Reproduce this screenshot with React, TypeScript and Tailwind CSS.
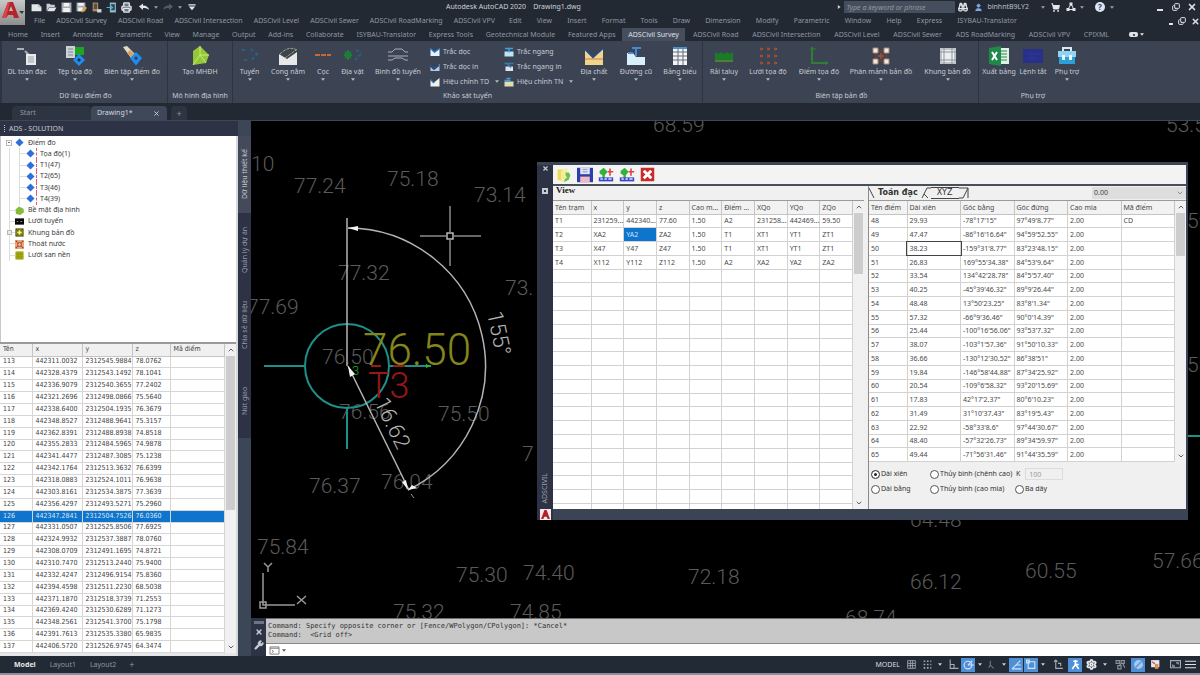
import React, { useState } from 'react';
import {
  Binoculars,
  ChevronDown,
  ChevronUp,
  Copy,
  Printer,
  Settings,
  ShoppingCart,
  User,
  Wrench,
  X
} from 'lucide-react';

const MENU_ADS = [
  'File',
  'ADSCivil Survey',
  'ADSCivil Road',
  'ADSCivil Intersection',
  'ADSCivil Level',
  'ADSCivil Sewer',
  'ADSCivil RoadMarking',
  'ADSCivil VPV'
];

const MENU_CAD = [
  'Edit',
  'View',
  'Insert',
  'Format',
  'Tools',
  'Draw',
  'Dimension',
  'Modify',
  'Parametric',
  'Window',
  'Help',
  'Express',
  'ISYBAU-Translator'
];

const TABS_MAIN = [
  'Home',
  'Insert',
  'Annotate',
  'Parametric',
  'View',
  'Manage',
  'Output',
  'Add-ins',
  'Collaborate',
  'ISYBAU-Translator',
  'Express Tools',
  'Geotechnical Module',
  'Featured Apps',
  'ADSCivil Survey'
];

const TABS_ADS = [
  'ADSCivil Road',
  'ADSCivil Intersection',
  'ADSCivil Level',
  'ADSCivil Sewer',
  'ADS RoadMarking',
  'ADSCivil VPV',
  'CPIXML'
];

const POINTS = [
  ['113', '442311.0032', '2312545.9884', '78.0762'],
  ['114', '442328.4379', '2312543.1492', '78.1041'],
  ['115', '442336.9079', '2312540.3655', '77.2402'],
  ['116', '442321.2696', '2312498.0866', '75.5640'],
  ['117', '442338.6400', '2312504.1935', '76.3679'],
  ['118', '442348.8527', '2312488.9641', '75.3157'],
  ['119', '442362.8391', '2312488.8938', '74.8518'],
  ['120', '442355.2833', '2312484.5965', '74.9878'],
  ['121', '442341.4477', '2312487.3085', '75.1238'],
  ['122', '442342.1764', '2312513.3632', '76.6399'],
  ['123', '442318.0883', '2312524.1011', '76.9638'],
  ['124', '442303.8161', '2312534.3875', '77.3639'],
  ['125', '442356.4297', '2312493.5271', '75.2960'],
  ['126', '442347.2841', '2312504.7526', '76.0360'],
  ['127', '442331.0507', '2312525.8506', '77.6925'],
  ['128', '442324.9932', '2312537.3887', '78.0760'],
  ['129', '442308.0709', '2312491.1695', '74.8721'],
  ['130', '442310.7470', '2312513.2440', '75.9400'],
  ['131', '442332.4247', '2312496.9154', '75.8360'],
  ['132', '442394.4598', '2312511.2230', '68.5038'],
  ['133', '442371.1870', '2312518.3739', '71.2553'],
  ['134', '442369.4240', '2312530.6289', '71.1273'],
  ['135', '442348.2561', '2312541.3700', '75.1798'],
  ['136', '442391.7613', '2312535.3380', '65.9835'],
  ['137', '442406.5720', '2312526.9745', '64.3474']
];

const STATION_HEAD = ['Tên trạm', 'x', 'y', 'z', 'Cao m...', 'Điểm ...', 'XQo', 'YQo', 'ZQo'];

const STATIONS = [
  ['T1', '231259...', '442340...', '77.60', '1.50', 'A2', '231258...', '442469...', '59.50'],
  ['T2', 'XA2', 'YA2', 'ZA2', '1.50', 'T1', 'XT1', 'YT1', 'ZT1'],
  ['T3', 'X47', 'Y47', 'Z47', '1.50', 'T1', 'XT1', 'YT1', 'ZT1'],
  ['T4', 'X112', 'Y112', 'Z112', '1.50', 'A2', 'XA2', 'YA2', 'ZA2']
];

const SHOT_HEAD = ['Tên điểm', 'Dài xiên', 'Góc bằng', 'Góc đứng', 'Cao mia', 'Mã điểm'];

const SHOTS = [
  ['48', '29.93', '-78°17\'15"', '97°49\'8.77"', '2.00', 'CD'],
  ['49', '47.47', '-86°16\'16.64"', '94°59\'52.55"', '2.00', ''],
  ['50', '38.23', '-159°31\'8.77"', '83°23\'48.15"', '2.00', ''],
  ['51', '26.83', '169°55\'34.38"', '84°53\'9.64"', '2.00', ''],
  ['52', '33.54', '134°42\'28.78"', '84°5\'57.40"', '2.00', ''],
  ['53', '40.25', '-45°39\'46.32"', '89°9\'26.44"', '2.00', ''],
  ['54', '48.48', '13°50\'23.25"', '83°8\'1.34"', '2.00', ''],
  ['55', '57.32', '-66°9\'36.46"', '90°0\'14.39"', '2.00', ''],
  ['56', '25.44', '-100°16\'56.06"', '93°53\'7.32"', '2.00', ''],
  ['57', '38.07', '-103°1\'57.36"', '91°50\'10.33"', '2.00', ''],
  ['58', '36.66', '-130°12\'30.52"', '86°38\'51"', '2.00', ''],
  ['59', '19.84', '-146°58\'44.88"', '87°34\'25.92"', '2.00', ''],
  ['60', '20.54', '-109°6\'58.32"', '93°20\'15.69"', '2.00', ''],
  ['61', '17.83', '42°17\'2.37"', '80°6\'10.23"', '2.00', ''],
  ['62', '31.49', '31°10\'37.43"', '83°19\'5.43"', '2.00', ''],
  ['63', '22.92', '-58°33\'8.6"', '97°44\'30.67"', '2.00', ''],
  ['64', '48.40', '-57°32\'26.73"', '89°34\'59.97"', '2.00', ''],
  ['65', '49.44', '-71°56\'31.46"', '91°44\'35.59"', '2.00', '']
];

/* Spot heights on the drawing: x, baseline y, text */
const HEIGHTS: [number, number, string][] = [
  [0, 50, '10'],
  [43, 72, '77.24'],
  [136, 65, '75.18'],
  [223, 81, '73.14'],
  [87, 159, '77.32'],
  [-4, 193, '77.69'],
  [254, 174, '73.'],
  [71, 243, '76.50'],
  [187, 300, '75.50'],
  [88, 298, '76.56'],
  [58, 372, '76.37'],
  [130, 368, '76.04'],
  [271, 340, '7'],
  [6, 433, '75.84'],
  [205, 461, '75.30'],
  [272, 459, '74.40'],
  [142, 498, '75.32'],
  [259, 498, '74.85'],
  [437, 463, '72.18'],
  [659, 468, '66.12'],
  [774, 457, '60.55'],
  [901, 447, '57.66'],
  [594, 504, '68.74'],
  [402, 11, '68.59'],
  [915, 11, '53.5'],
  [659, 406, '64.48'],
  [936, 107, '59'],
  [936, 251, '58']
];

function Svg({ className, children }: { className: string; children: React.ReactNode }) {
  return (
    <svg viewBox="0 0 20 20" className={className} fill="none" aria-hidden="true">
      {children}
    </svg>
  );
}

function Caret({ className = 'text-[#9aa2ae]' }: { className?: string }) {
  return (
    <svg viewBox="0 0 6 4" className={`h-[3px] w-[4px] shrink-0 ${className}`} aria-hidden="true">
      <path d="M0 0h6L3 4z" fill="currentColor" />
    </svg>
  );
}

interface RibbonButtonProps {
  label: string;
  width: string;
  caret?: boolean;
  children: React.ReactNode;
}

function RibbonButton({ label, width, caret = true, children }: RibbonButtonProps) {
  return (
    <button className={`flex h-[46px] shrink-0 flex-col items-center pt-[5px] whitespace-nowrap ${width}`}>
      <Svg className="h-5 w-5 shrink-0">{children}</Svg>
      <span className="leading-[11px]">{label}</span>
      {caret && <Caret className="mt-px text-[#b5bbc5]" />}
    </button>
  );
}

function SmallButton({ label, caret, children }: { label: string; caret?: boolean; children: React.ReactNode }) {
  return (
    <button className="flex h-[15px] items-center gap-[3px] whitespace-nowrap">
      <Svg className="h-[10px] w-[10px] shrink-0">{children}</Svg>
      {label}
      {caret && <Caret className="ml-[3px] text-[#b5bbc5]" />}
    </button>
  );
}

function Panel({ title, className = '', children }: { title: string; className?: string; children: React.ReactNode }) {
  return (
    <section className={`flex shrink-0 flex-col bg-[#3c4453] ${className}`}>
      <div className="flex h-[48px]">{children}</div>
      <h2 className="text-center leading-[13px]">{title}</h2>
    </section>
  );
}

function TitleBar() {
  return (
    <div className="flex h-[14px] items-center text-[#b9c0ca]">
      <div className="flex w-[421px] shrink-0 items-center gap-[4px] pl-[6px] text-[#e3e6ea]">
        <button aria-label="New">
          <Svg className="h-[11px] w-[11px]">
            <path d="M1 4h13l5 5v8H1z" fill="currentColor" />
            <path d="M14 4v5h5" stroke="#8d95a0" />
          </Svg>
        </button>
        <button aria-label="Open">
          <Svg className="h-[11px] w-[11px]">
            <path d="M1 3h6l2 2h7v4H6l-5 8z" fill="#c8cdd4" />
            <path d="M6 10h13l-4 7H2z" fill="currentColor" />
          </Svg>
        </button>
        <button aria-label="Save">
          <Svg className="h-[11px] w-[11px]">
            <path d="M1 1h18v18H1z" fill="#a8adb5" />
            <path d="M5 2h10v6H5zM4 11h12v7H4z" fill="#f2f2f2" />
          </Svg>
        </button>
        <button aria-label="Save As">
          <Svg className="h-[11px] w-[11px]">
            <path d="M1 1h16v16H1z" fill="#a8adb5" />
            <path d="M4 2h10v5H4zM4 10h8v7H4z" fill="#f2f2f2" />
            <path d="M9 17l8-9 3 3-8 8z" fill="#d9a441" />
          </Svg>
        </button>
        <button aria-label="Open from mobile">
          <Svg className="h-[11px] w-[11px]">
            <path d="M3 1h10v16H3z" fill="#b48a5f" />
            <path d="M5 3h6v10H5z" fill="#58504b" />
            <path d="M11 13h8v6h-8z" fill="#d2d5da" />
          </Svg>
        </button>
        <button aria-label="Save to mobile">
          <Svg className="h-[11px] w-[11px]">
            <path d="M7 1h11v18H7z" fill="#9fb9c6" />
            <path d="M9 4h7v11H9z" fill="#29475a" />
            <path d="M1 10h10M8 6l4 4-4 4" stroke="#45b4d8" strokeWidth="2" />
          </Svg>
        </button>
        <button aria-label="Plot">
          <Printer className="h-[11px] w-[11px] fill-[#6d7681]" strokeWidth={3} />
        </button>
        <button aria-label="Undo" className="ml-[3px] flex items-center gap-[5px]">
          <Svg className="h-[10px] w-[10px]">
            <path d="M0 9l8-6v4c7 0 11 3 12 9-3-3-6-4-12-4v4z" fill="currentColor" />
          </Svg>
          <Caret />
        </button>
        <button aria-label="Redo" className="ml-px flex items-center gap-[5px] text-[#525c69]">
          <Svg className="h-[10px] w-[10px]">
            <path d="M20 9l-8-6v4C5 7 1 10 0 16c3-3 6-4 12-4v4z" fill="currentColor" />
          </Svg>
          <Caret />
        </button>
        <button aria-label="Customize" className="ml-[2px]">
          <Svg className="h-[8px] w-[8px]">
            <path d="M1 3h18v3H1zM2 9h16l-8 9z" fill="currentColor" />
          </Svg>
        </button>
      </div>
      <h1 className="flex shrink-0 gap-[7px] whitespace-nowrap text-[#cdd2d9]">
        <span>Autodesk AutoCAD 2020</span>
        <span>Drawing1.dwg</span>
      </h1>
      <div className="ml-auto flex shrink-0 items-center pr-[3px]">
        <Svg className="mr-[3px] h-[4px] w-[4px]">
          <path d="M4 0l14 10L4 20z" fill="#cdd2d9" />
        </Svg>
        <input
          aria-label="Search"
          placeholder="Type a keyword or phrase"
          className="h-[12px] w-[111px] bg-[#454e5c] px-[2px] italic placeholder:text-[#9199a5]"
        />
        <button aria-label="Find" className="ml-[3px]">
          <Binoculars className="h-[10px] w-[10px] text-[#e3e6ea]" strokeWidth={3} />
        </button>
        <button className="ml-[6px] flex items-center gap-[4px]">
          <User className="h-[9px] w-[9px] fill-[#7fa8e6] text-[#7fa8e6]" />
          binhntB9LY2
          <Caret className="ml-[8px] text-[#9aa2ae]" />
        </button>
        <button aria-label="App store" className="ml-[6px]">
          <ShoppingCart className="h-[9px] w-[9px] fill-[#e3e6ea] text-[#e3e6ea]" strokeWidth={3} />
        </button>
        <button aria-label="Stay connected" className="ml-[6px] flex items-center gap-[4px]">
          <Svg className="h-[10px] w-[10px]">
            <path d="M10 4L4 15h12z" stroke="#e3e6ea" strokeWidth="2" />
            <path d="M7 1h6v6H7zM1 12h6v6H1zM13 12h6v6h-6z" fill="#e3e6ea" />
          </Svg>
          <Caret />
        </button>
        <button aria-label="Help" className="ml-[11px] flex items-center gap-[5px]">
          <span className="flex h-[10px] w-[10px] items-center justify-center rounded-full bg-[#dfe5f2] text-[8px] leading-none font-bold text-[#28407c]">
            ?
          </span>
          <Caret />
        </button>
        <button aria-label="Minimize" className="mt-[6px] ml-[43px] h-[2px] w-[6px] bg-[#dfe2e7]" />
        <button aria-label="Restore" className="ml-[9px]">
          <Copy className="h-[8px] w-[8px] -scale-y-100 text-[#dfe2e7]" strokeWidth={3} />
        </button>
        <button aria-label="Close" className="ml-[7px]">
          <X className="h-[10px] w-[10px] text-[#dfe2e7]" strokeWidth={4} />
        </button>
      </div>
    </div>
  );
}

function Header() {
  return (
    <header className="flex h-[28px] shrink-0">
      <button
        aria-label="Application menu"
        className="flex h-[25px] w-[25px] shrink-0 items-center justify-center bg-linear-to-b from-[#c9c9c9] to-[#8d8d8d]"
      >
        <svg viewBox="0 0 25 25" className="h-[25px] w-[25px]" aria-hidden="true">
          <path d="M2 18L8 2h5l6 16h-5l-1-3H8l-2 3z" fill="#b3242b" />
          <path d="M9 11l2-5 2 5z" fill="#b9b9b9" />
          <path d="M2 18L8 2h2L6 18z" fill="#d8444a" />
          <path d="M19 11h5l-2 3z" fill="#3a3a3a" />
        </svg>
      </button>
      <div className="min-w-0 flex-1">
        <TitleBar />
        <nav className="flex h-[14px] items-center text-[#8f97a3]">
          <div className="flex w-[470px] shrink-0 justify-between pl-[9px] whitespace-nowrap">
            {MENU_ADS.map((item) => (
              <button key={item}>{item}</button>
            ))}
          </div>
          <div className="ml-[14px] flex w-[508px] shrink-0 justify-between whitespace-nowrap">
            {MENU_CAD.map((item) => (
              <button key={item}>{item}</button>
            ))}
          </div>
          <div className="ml-auto flex items-center gap-[5px] text-[#dfe2e7]">
            <button aria-label="Minimize drawing" className="mt-[6px] h-[2px] w-[4px] bg-current" />
            <button aria-label="Restore drawing">
              <Copy className="h-[8px] w-[8px] -scale-y-100" strokeWidth={3} />
            </button>
            <button aria-label="Close drawing">
              <X className="h-[9px] w-[9px]" strokeWidth={4} />
            </button>
          </div>
        </nav>
      </div>
    </header>
  );
}

function RibbonTabs() {
  const [active, setActive] = useState('ADSCivil Survey');

  const renderTab = (tab: string) => (
    <button
      key={tab}
      onClick={() => setActive(tab)}
      className={tab === active ? 'bg-[#464e5d] px-[6px] text-[#dde0e5]' : 'px-[6px]'}
    >
      {tab}
    </button>
  );

  return (
    <nav className="flex h-[13px] shrink-0 items-center whitespace-nowrap text-[#8f97a3]">
      <div className="flex h-full w-[685px] shrink-0 justify-between pl-[2px]">{TABS_MAIN.map(renderTab)}</div>
      <div className="flex h-full w-[430px] shrink-0 justify-between pl-[2px]">{TABS_ADS.map(renderTab)}</div>
      <button aria-label="Ribbon display" className="ml-[14px] flex items-center gap-[2px]">
        <span className="flex h-[5px] w-[9px] items-center justify-center rounded-xs bg-[#dfe2e7]">
          <span className="h-[2px] w-[2px] bg-[#4a5361]" />
        </span>
        <Caret className="text-[#dfe2e7]" />
      </button>
    </nav>
  );
}

function Ribbon() {
  return (
    <div className="flex h-[62px] shrink-0 gap-px bg-[#2d3441] pl-[2px] text-[#c6cbd3]">
      <Panel title="Dữ liệu điểm đo" className="w-[165px] pl-[2px]">
        <RibbonButton label="DL toàn đạc" width="w-[46px]">
          <path d="M0 3h7M8 5l4 4" stroke="#a9afb8" strokeWidth="2" />
          <path d="M9 8h10v11H9z" fill="#e8eaec" />
          <path d="M11 10h6v7h-6z" fill="#c2c7cd" />
        </RibbonButton>
        <RibbonButton label="Tệp tọa độ" width="w-[50px]">
          <path d="M1 0h9v12H1z" fill="#cdd2d6" />
          <path d="M3 3h5M3 6h5M3 9h5" stroke="#7c8691" />
          <path d="M10 1h9v8h-9z" fill="#1ea51e" />
          <path d="M14 8l6 6-6 6-6-6z" fill="#1d8df2" />
          <path d="M14 12l2 2-2 2-2-2z" fill="#243248" />
        </RibbonButton>
        <RibbonButton label="Biên tập điểm đo" width="w-[64px]">
          <path d="M1 1l4-1 8 8-4 4z" fill="#e2dcc8" />
          <path d="M5 7l3-3 4 4-3 3z" fill="#d8a25a" />
          <path d="M14 8l4 4-4 5-4-5z" stroke="#1d8df2" strokeWidth="3" />
        </RibbonButton>
      </Panel>
      <Panel title="Mô hình địa hình" className="w-[64px] items-center">
        <RibbonButton label="Tạo MHĐH" width="w-[62px]" caret={false}>
          <path d="M3 5l7-5 9 9-3 8-13 2z" fill="#93c83d" />
          <path d="M3 19L10 9l9 0M10 9V0M10 9l6 8" stroke="#cdeb6a" />
        </RibbonButton>
      </Panel>
      <Panel title="Khảo sát tuyến" className="w-[469px]">
        <RibbonButton label="Tuyến" width="w-[33px]">
          <path d="M2 4h4M11 3l7 7M18 7l-7 8M4 14h3" stroke="#2a5f8a" strokeWidth="2" strokeDasharray="3 3" />
        </RibbonButton>
        <RibbonButton label="Cong nằm" width="w-[44px]">
          <path d="M1 8l8 5 10-7v13H1z" fill="#e6e8e8" />
          <path d="M2 8C8 2 13 1 19 4M7 12l11-8" stroke="#a3a86a" strokeDasharray="3 1" />
        </RibbonButton>
        <RibbonButton label="Cọc" width="w-[26px]">
          <path d="M2 9h16" stroke="#c46a36" strokeWidth="2" strokeDasharray="5 1" />
        </RibbonButton>
        <RibbonButton label="Địa vật" width="w-[33px]">
          <path d="M1 9h8M5 4v10M2 6l6 6M8 6l-6 6" stroke="#1c7f35" strokeWidth="2" />
          <path d="M12 14l6-6M13 4l5 3" stroke="#2a5f8a" strokeWidth="2" strokeDasharray="3 2" />
        </RibbonButton>
        <RibbonButton label="Bình đồ tuyến" width="w-[58px]">
          <path d="M0 6h4l3-3h7l3 3h3M0 10h20M0 14h4l3-2h7l3 2h3" stroke="#a9afb8" />
        </RibbonButton>
        <div className="ml-[3px] w-[74px] shrink-0 pt-[3px]">
          <SmallButton label="Trắc dọc">
            <path d="M1 3l8 7 10-7v15H1z" fill="#e4f1fb" />
            <path d="M1 3l8 7 10-7" stroke="#2472c8" strokeWidth="3" />
          </SmallButton>
          <SmallButton label="Trắc dọc in">
            <path d="M1 7l7 5 11-8v14H1z" fill="#b9cbe0" />
            <path d="M1 7l7 7 10-8" stroke="#24497e" strokeWidth="4" />
          </SmallButton>
          <SmallButton label="Hiệu chỉnh TD" caret>
            <path d="M1 6l7 5 11-9v17H1z" fill="#f0f2ea" />
            <path d="M1 5l7 7" stroke="#2472c8" strokeWidth="3" />
          </SmallButton>
        </div>
        <div className="w-[70px] shrink-0 pt-[3px]">
          <SmallButton label="Trắc ngang">
            <path d="M1 9h18v10H1z" fill="#bfe2f7" />
            <path d="M2 3h16M10 3v8" stroke="#39a3de" strokeWidth="3" />
          </SmallButton>
          <SmallButton label="Trắc ngang in">
            <path d="M3 9h15v9H3z" fill="#d7e5ef" />
            <path d="M1 3h18M6 3l8 8" stroke="#2f7fb4" strokeWidth="3" />
          </SmallButton>
          <SmallButton label="Hiệu chỉnh TN" caret>
            <path d="M1 9h18v10H1z" fill="#e2dcb0" />
            <path d="M1 7h12M5 3h8" stroke="#39a3de" strokeWidth="3" />
          </SmallButton>
        </div>
        <RibbonButton label="Địa chất" width="w-[40px]">
          <path d="M1 3l8 8 10-9v17H1z" fill="#f0d48b" />
          <path d="M1 13h18" stroke="#dba774" strokeWidth="2" />
          <path d="M1 3l8 8 10-9" stroke="#24497e" strokeWidth="2" />
        </RibbonButton>
        <RibbonButton label="Đường cũ" width="w-[44px]">
          <path d="M1 7h6l3 4h9v8H1z" fill="#d9effb" />
          <path d="M6 2h9M10 2v8M2 7h5" stroke="#4289d6" strokeWidth="2" />
        </RibbonButton>
        <RibbonButton label="Bảng biểu" width="w-[44px]">
          <path d="M3 2h14v17H3z" fill="#f3f4f5" />
          <path d="M3 6h14M3 10h14M3 14h14M8 2v17M13 2v17" stroke="#626c79" />
          <path d="M3 2h14" stroke="#4a90c9" strokeWidth="2" />
        </RibbonButton>
      </Panel>
      <Panel title="Biên tập bản đồ" className="w-[275px] pl-[2px]">
        <RibbonButton label="Rải taluy" width="w-[38px]">
          <path d="M1 15h18" stroke="#4f7f33" strokeWidth="2" />
          <path d="M1 6l3 2 3-2 3 2 3-2 3 2 3-2v8H1z" fill="#1b7a2a" />
        </RibbonButton>
        <RibbonButton label="Lưới tọa độ" width="w-[50px]">
          <path d="M2 3h3M9 3h3M16 3h3M2 10h3M9 10h3M16 10h3M2 17h3M9 17h3M16 17h3" stroke="#a3563f" strokeWidth="2" />
          <path d="M3 1v4M10 1v4M17 1v4M3 8v4M10 8v4M17 8v4M3 15v4M10 15v4M17 15v4" stroke="#8d4331" />
        </RibbonButton>
        <RibbonButton label="Điểm tọa độ" width="w-[52px]">
          <path d="M3 1v16h16" stroke="#2c7f35" strokeWidth="2" />
          <path d="M1 3h6M17 15v4" stroke="#2c7f35" />
        </RibbonButton>
        <RibbonButton label="Phân mảnh bản đồ" width="w-[72px]">
          <path d="M5 5h10v10H5z" stroke="#7d4435" strokeWidth="1" />
          <path d="M2 2h5v5H2zM13 2h5v5h-5zM2 13h5v5H2zM13 13h5v5h-5z" fill="#f1e9e2" stroke="#a98575" />
          <path d="M10 7v6M7 10h6" stroke="#9a4b35" strokeWidth="2" />
        </RibbonButton>
        <RibbonButton label="Khung bản đồ" width="w-[61px]">
          <path d="M3 3h14v14H3z" fill="#eceeee" stroke="#bfc4c8" strokeWidth="2" />
          <path d="M6 2v16M14 2v16M2 6h16M2 14h16" stroke="#8d959d" />
        </RibbonButton>
      </Panel>
      <div className="flex-1 bg-[#3c4453]">
        <Panel title="Phụ trợ" className="w-[106px] pl-[2px]">
          <RibbonButton label="Xuất bảng" width="w-[36px]" caret={false}>
            <path d="M10 2h10v16H10z" fill="#dff0e4" />
            <path d="M12 5h6M12 8h6M12 11h6M12 14h6" stroke="#2c8a50" />
            <path d="M0 2l12-2v20L0 18z" fill="#1e8a4a" />
            <path d="M3 6l5 8M8 6l-5 8" stroke="#fff" strokeWidth="2" />
          </RibbonButton>
          <RibbonButton label="Lệnh tắt" width="w-[32px]" caret={false}>
            <path d="M0 3h20v14H0z" fill="#28318a" />
            <path d="M3 8h14M3 12h10" stroke="#303896" />
          </RibbonButton>
          <RibbonButton label="Phụ trợ" width="w-[36px]">
            <path d="M6 5V2h8v3" stroke="#d7e9f2" strokeWidth="2" />
            <path d="M1 5h18v6H1z" fill="#8fd3f2" />
            <path d="M2 11h16v7H2z" fill="#2b9fd6" />
            <path d="M5 9h3v5H5zM12 9h3v5h-3z" fill="#e8f6fc" />
          </RibbonButton>
        </Panel>
      </div>
    </div>
  );
}

function FileTabs() {
  return (
    <nav className="flex h-[17px] shrink-0 items-end pl-[12px] text-[#9199a5]">
      <button className="h-[14px] w-[79px] rounded-t-sm bg-[#2d3542] pl-[8px] text-left">Start</button>
      <div className="flex h-[14px] w-[76px] items-center rounded-t-sm bg-[#3e4858] pr-[7px] pl-[6px] text-[#d5d9df]">
        <button>Drawing1*</button>
        <button aria-label="Close drawing tab" className="ml-auto">
          <X className="h-[7px] w-[7px]" strokeWidth={3} />
        </button>
      </div>
      <button aria-label="New tab" className="ml-[4px] h-[14px] w-[16px] rounded-t-sm bg-[#2d3542] text-[9px] leading-none">
        +
      </button>
    </nav>
  );
}

const diamond = <path d="M10 1l9 9-9 9-9-9z" fill="#2f6fdc" />;

const TREE = [
  {
    label: 'Bề mặt địa hình',
    icon: <path d="M1 8l8-7 10 5 1 8-8 6-10-2z" fill="#84bb3a" />
  },
  {
    label: 'Lưới tuyến',
    icon: (
      <>
        <path d="M0 3h20v14H0z" fill="#0b0b0b" />
        <path d="M4 10h3M12 10h4" stroke="#999" strokeWidth="2" />
      </>
    )
  },
  {
    label: 'Khung bản đồ',
    expandable: true,
    icon: (
      <>
        <path d="M1 1h18v18H1z" fill="#3a3a05" />
        <path d="M4 4h12v12H4z" stroke="#a8a818" strokeWidth="2" />
        <path d="M10 5v10M5 10h10" stroke="#f7f76b" strokeWidth="4" />
      </>
    )
  },
  {
    label: 'Thoát nước',
    icon: (
      <>
        <path d="M0 0h20v20H0z" fill="#f0a27a" />
        <path d="M2 2l16 16M18 2L2 18" stroke="#7b3a20" strokeWidth="3" strokeDasharray="3 2" />
        <circle cx="10" cy="10" r="4" fill="#f5c3a6" stroke="#a2482a" strokeWidth="2" />
      </>
    )
  },
  {
    label: 'Lưới san nền',
    icon: (
      <>
        <path d="M1 1h18v18H1z" fill="#a2a80f" />
        <path d="M1 7h18M1 13h18M7 1v18M13 1v18" stroke="#8b9110" />
      </>
    )
  }
];

function Tree() {
  return (
    <ul className="flex h-[124px] flex-col text-[#3c3c3c]">
      <li className="flex flex-1 items-center">
        <span className="ml-[5px] flex h-[6px] w-[6px] items-center justify-center border border-[#b8b8b8]">
          <span className="h-px w-[2px] bg-[#777]" />
        </span>
        <Svg className="ml-[3px] h-[9px] w-[9px]">{diamond}</Svg>
        <span className="ml-[4px]">Điểm đo</span>
      </li>
      {['Tọa độ(1)', 'T1(47)', 'T2(65)', 'T3(46)', 'T4(39)'].map((label) => (
        <li key={label} className="ml-[8px] flex flex-1 items-center border-l border-[#dcdcdc]">
          <span className="ml-[9px] w-[7px] self-stretch border-l border-[#dcdcdc]">
            <span className="mt-[5px] block h-px w-full bg-[#dcdcdc]" />
          </span>
          <Svg className="h-[9px] w-[9px]">{diamond}</Svg>
          <span className="h-full w-[2px] border-r border-dashed border-[#e05a7a]" />
          <span className="ml-[3px]">{label}</span>
        </li>
      ))}
      {TREE.map((node) => (
        <li key={node.label} className="flex flex-1 items-center">
          <span className="ml-[8px] w-[6px] self-stretch border-l border-[#dcdcdc]">
            <span className="mt-[5px] block h-px w-full bg-[#dcdcdc]" />
            {node.expandable && (
              <span className="-mt-[3px] -ml-[3px] block h-[5px] w-[5px] border border-[#b8b8b8] bg-[#e8e8e8]" />
            )}
          </span>
          <Svg className="h-[9px] w-[9px]">{node.icon}</Svg>
          <span className="ml-[4px]">{node.label}</span>
        </li>
      ))}
    </ul>
  );
}

function ScrollBar({ thumb }: { thumb: string }) {
  return (
    <div className="flex w-[11px] shrink-0 flex-col items-center bg-[#f1f1f1] text-[#606060]">
      <ChevronUp className="my-[2px] h-[8px] w-[8px] shrink-0" strokeWidth={3} />
      <div className={`w-[9px] bg-[#cdcdcd] ${thumb}`} />
      <ChevronDown className="mt-auto mb-[2px] h-[8px] w-[8px] shrink-0" strokeWidth={3} />
    </div>
  );
}

function PointTable() {
  const [selected, setSelected] = useState('126');

  return (
    <div className="flex h-[311px] shrink-0 overflow-hidden border-t-2 border-[#9a9a9a] bg-white">
      <div className="min-w-0 flex-1">
        <table className="h-[309px] w-full table-fixed border-collapse font-['DejaVu_Sans_Condensed','DejaVu_Sans',sans-serif] text-[#3e3e3e]">
          <colgroup>
            <col className="w-[32px]" />
            <col className="w-[50px]" />
            <col className="w-[50px]" />
            <col className="w-[38px]" />
            <col />
          </colgroup>
          <thead>
            <tr className="h-[12px] bg-[#f0f0f0] text-left">
              {['Tên', 'x', 'y', 'z', 'Mã điểm'].map((head) => (
                <th key={head} className="border-r border-b border-[#c4c4c4] px-[3px] font-normal leading-none">
                  {head}
                </th>
              ))}
            </tr>
          </thead>
          <tbody>
            {POINTS.map((row) => (
              <tr
                key={row[0]}
                onClick={() => setSelected(row[0])}
                className={row[0] === selected ? 'bg-[#0f74cb] text-[#d8e8f7]' : ''}
              >
                {[...row, ''].map((cell, i) => (
                  <td key={i} className="border-r border-b border-[#d6d6d6] px-[3px] py-0 leading-none whitespace-nowrap">
                    {cell}
                  </td>
                ))}
              </tr>
            ))}
          </tbody>
        </table>
      </div>
      <ScrollBar thumb="h-[154px]" />
    </div>
  );
}

function SidePalette() {
  return (
    <aside className="flex w-[251px] shrink-0 bg-[#3b4656]">
      <div className="flex min-w-0 flex-1 flex-col">
        <h2 className="flex h-[15px] shrink-0 items-center gap-[4px] bg-[#2d3344] pl-[4px] text-[#c6cad2]">
          <span className="h-[7px] border-l border-dotted border-[#c6cad2]" />
          ADS - SOLUTION
        </h2>
        <div className="flex min-h-0 flex-1 flex-col border-r-2 border-[#d5d8dc] bg-white">
          <div className="min-h-0 flex-1 overflow-hidden border-l border-[#c8c8c8] pt-[1px]">
            <Tree />
          </div>
          <PointTable />
          <div className="h-[3px] shrink-0 bg-[#e4e6e9]" />
        </div>
      </div>
      <div className="flex w-[13px] shrink-0 flex-col pt-[15px] text-[#969ca8]">
        {[
          ['Dữ liệu thiết kế', 'h-[77px] bg-[#444a5a] text-[#c8ccd4]'],
          ['Quản lý dự án', 'h-[73px] bg-[#2d3344]'],
          ['Chia sẻ dữ liệu', 'h-[77px] bg-[#2d3344]'],
          ['Nút giao', 'h-[75px] bg-[#2d3344]']
        ].map(([label, style]) => (
          <button
            key={label}
            className={`flex w-[13px] rotate-180 items-center justify-center whitespace-nowrap [writing-mode:vertical-rl] ${style}`}
          >
            {label}
          </button>
        ))}
      </div>
    </aside>
  );
}

function Drawing() {
  return (
    <svg
      className="absolute inset-0 h-full w-full font-['Roboto','Liberation_Sans',sans-serif] font-light"
      fill="none"
      role="img"
      aria-label="Survey drawing"
    >
      <g fontSize="21" fill="#5a5a5a">
        {HEIGHTS.map(([x, y, text]) => (
          <text key={`${x}-${y}`} x={x} y={y}>
            {text}
          </text>
        ))}
      </g>

      {/* station mark */}
      <g stroke="#1f8f8a" strokeWidth="2">
        <circle cx="96" cy="245" r="42" />
        <path d="M13 245h41M138 245h42M96 287v41M936 315h13" />
      </g>
      <text x="112" y="244" fontSize="44" fill="#85851a">
        76.50
      </text>
      <text x="117" y="277" fontSize="36" fill="#971616">
        T3
      </text>
      <path d="M120 245h10M142 245h12" stroke="#a01818" strokeWidth="2" />
      <path d="M175 243l5 2-5 2z" fill="#2fb52f" />
      <text x="101" y="254" fontSize="13" fill="#22b022">
        3
      </text>

      {/* bearing and distance dimension */}
      <g stroke="#b4b4b4" strokeWidth="1.5">
        <path d="M96 97v148" />
        <path d="M97 245l61 124" />
        <path d="M97 107A138 138 0 0 1 157 369" />
      </g>
      <g fill="#f4f4f4">
        <path d="M97 107l10-2v5z" />
        <path d="M97 245l7 8-5 3z" />
        <path d="M157 369l-6-8 4-2z" />
        <path d="M157 369l4-5 5 3z" />
      </g>
      <path d="M160 373l3 4" stroke="#999" />
      <g fontSize="22" fill="#b4b4b4">
        <text transform="translate(123 281) rotate(64)">16.62</text>
        <text transform="translate(236 192) rotate(78)">155°</text>
      </g>

      {/* cursor */}
      <g stroke="#8b8b8b" strokeWidth="1.5">
        <path d="M169 115h26M203 115h27M199 85v26M199 119v26" />
        <path d="M196 112h6v6h-6z" stroke="#b9b9b9" strokeWidth="1.5" />
      </g>

      {/* UCS icon */}
      <g stroke="#999" strokeWidth="1.5">
        <path d="M12 452v32h32" />
        <path d="M9 481h6v6H9z" />
        <path d="M13 442l4 4 4-4M17 446v5M46 475l9 8M55 475l-9 8" />
      </g>
    </svg>
  );
}

function StationTable() {
  const blank = Array.from({ length: 18 }, () => Array(9).fill(''));

  return (
    <div className="flex h-[309px] overflow-hidden border-t border-[#9a9a9a] bg-white">
      <div className="min-w-0 flex-1">
        <table className="h-[317px] w-full table-fixed border-collapse text-[#4a4a4a]">
          <colgroup>
            <col className="w-[38px]" />
            {STATION_HEAD.slice(1).map((head) => (
              <col key={head} />
            ))}
          </colgroup>
          <thead>
            <tr className="h-[13px] bg-[#f2f2f2] text-left">
              {STATION_HEAD.map((head) => (
                <th key={head} className="border-r border-b border-[#c4c4c4] px-[2px] font-normal leading-none whitespace-nowrap">
                  {head}
                </th>
              ))}
            </tr>
          </thead>
          <tbody>
            {[...STATIONS, ...blank].map((row, r) => (
              <tr key={r} className="h-[13px]">
                {row.map((cell, c) => (
                  <td
                    key={c}
                    className={`border-r border-b border-[#d2d2d2] px-[2px] py-0 leading-none whitespace-nowrap ${
                      r === 1 && c === 2 ? 'bg-[#0f74cb] text-[#cfe2f5]' : ''
                    }`}
                  >
                    {cell}
                  </td>
                ))}
              </tr>
            ))}
          </tbody>
        </table>
      </div>
      <ScrollBar thumb="h-[61px]" />
    </div>
  );
}

function ShotTable() {
  return (
    <div className="flex h-[262px] shrink-0 border-t border-[#9a9a9a] bg-white">
      <div className="min-w-0 flex-1">
        <table className="h-[261px] w-full table-fixed border-collapse text-[#4a4a4a]">
          <colgroup>
            <col className="w-[38px]" />
            {SHOT_HEAD.slice(1).map((head) => (
              <col key={head} />
            ))}
          </colgroup>
          <thead>
            <tr className="h-[13px] bg-[#f2f2f2] text-left">
              {SHOT_HEAD.map((head) => (
                <th key={head} className="border-r border-b border-[#c4c4c4] px-[2px] font-normal leading-none whitespace-nowrap">
                  {head}
                </th>
              ))}
            </tr>
          </thead>
          <tbody>
            {SHOTS.map((row, r) => (
              <tr key={row[0]}>
                {row.map((cell, c) => (
                  <td
                    key={c}
                    className={`border-r border-b border-[#d2d2d2] px-[2px] py-0 leading-none whitespace-nowrap ${
                      r === 2 && c === 1 ? 'outline outline-[#444]' : ''
                    }`}
                  >
                    {cell}
                  </td>
                ))}
              </tr>
            ))}
          </tbody>
        </table>
      </div>
      <ScrollBar thumb="h-[43px]" />
    </div>
  );
}

function MethodRadio({ label, value, method, onPick }: { label: string; value: string; method: string; onPick: (v: string) => void }) {
  return (
    <label className="flex items-center gap-px whitespace-nowrap">
      <input
        type="radio"
        name="method"
        value={value}
        checked={method === value}
        onChange={() => onPick(value)}
        className="h-[9px] w-[9px] shrink-0 appearance-none rounded-full border border-[#555] bg-white checked:bg-[#222] checked:shadow-[inset_0_0_0_2px_#fff]"
      />
      {label}
    </label>
  );
}

function SurveyDialog() {
  const [method, setMethod] = useState('slope');

  return (
    <div className="absolute top-[41px] right-[12px] left-[286px] flex border-t-[3px] border-r-2 border-[#3b4454] bg-[#3b4454]">
      <div className="flex w-[16px] shrink-0 flex-col items-center bg-[#2d3344] text-[#c6cad2]">
        <button aria-label="Close palette">
          <X className="h-[7px] w-[7px]" strokeWidth={4} />
        </button>
        <button aria-label="Auto-hide" className="mt-[16px] h-[6px] w-[6px] border-2 border-[#c6cad2]" />
        <span className="mt-auto rotate-180 text-[#9aa0ac] [writing-mode:vertical-rl]">ADSCIVIL</span>
        <svg viewBox="0 0 10 10" className="mt-[6px] h-[11px] w-[11px]" aria-hidden="true">
          <path d="M0 0h10v10H0z" fill="#f3e9ea" />
          <path d="M1 9l3-8h2l3 8H7L6 7H4L3 9z" fill="#b4202a" />
        </svg>
      </div>
      <div className="min-w-0 flex-1 pb-[11px]">
        <div className="flex h-[21px] items-center gap-[5px] border-b-2 border-[#4b5058] bg-[#f3f3f3] pl-[3px]">
          <button aria-label="Open">
            <Svg className="h-[16px] w-[16px]">
              <path d="M2 3h7v15l-7-2z" fill="#e9dc4f" />
              <path d="M6 5l8-4v12l-8 6z" fill="#f4ee9a" />
              <path d="M12 7h4l2 3-2 6-6 3 1-4 3-2-2-2z" fill="#6cc24a" />
            </Svg>
          </button>
          <button aria-label="Save">
            <Svg className="h-[16px] w-[16px]">
              <path d="M0 1h20v18H0z" fill="#2e3fa6" />
              <path d="M4 1h12v8H4z" fill="#dfe3f4" />
              <path d="M7 3h6M7 6h6" stroke="#8088b8" />
              <path d="M4 12h12v7H4z" fill="#f0b9c6" />
            </Svg>
          </button>
          {['Export points', 'Import points'].map((label) => (
            <button key={label} aria-label={label}>
              <Svg className="h-[16px] w-[16px]">
                <path d="M2 5l5-4 5 5-4 5-3-1-3-2z" fill="#35b23b" />
                <path d="M7 9v5" stroke="#35b23b" strokeWidth="3" />
                <path d="M12 6h7M15 2v9" stroke="#e0444a" strokeWidth="2" />
                <path d="M1 13h18v5H1z" fill="#3a48c8" />
                <path d="M3 15h3M8 15h3M13 15h4" stroke="#dfe3ff" strokeWidth="2" />
              </Svg>
            </button>
          ))}
          <button aria-label="Exit">
            <Svg className="h-[15px] w-[15px]">
              <path d="M1 1h18v18H1z" fill="#c92a2a" />
              <path d="M5 5l10 10M15 5L5 15" stroke="#fff" strokeWidth="4" />
            </Svg>
          </button>
        </div>
        <div className="flex bg-[#f0f0f0]">
          <div className="w-[311px] shrink-0">
            <h3 className="h-[14px] pl-[3px] font-['Liberation_Serif',serif] text-[9px] leading-[9px] font-bold text-[#222]">View</h3>
            <StationTable />
          </div>
          <div className="ml-[4px] flex min-w-0 flex-1 flex-col border-l border-[#8a8a8a]">
            <div className="flex h-[14px] shrink-0 items-center">
              <div className="flex items-center font-['DejaVu_Sans',sans-serif] text-[8px] text-[#333]">
                <svg viewBox="0 0 6 12" className="h-[12px] w-[6px]" fill="none" stroke="#444">
                  <path d="M0 1l5 10" />
                </svg>
                <button className="h-[12px] px-[3px] leading-[12px] font-bold">Toán đạc</button>
                <svg viewBox="0 0 10 12" className="h-[12px] w-[10px]" fill="none" stroke="#444">
                  <path d="M1 11L6 1h4M3 7l4 4" />
                </svg>
                <button className="h-[12px] border-t border-b border-[#444] px-[6px] leading-[10px]">XYZ</button>
                <svg viewBox="0 0 10 12" className="h-[12px] w-[10px]" fill="none" stroke="#444">
                  <path d="M0 1h9L4 11H0M9 1v10" />
                </svg>
              </div>
              <div className="relative ml-auto h-[12px] w-[94px]">
                <select aria-label="Offset" className="h-full w-full appearance-none bg-[#dedede] px-[2px] text-[#444]">
                  <option>0.00</option>
                </select>
                <ChevronDown className="pointer-events-none absolute top-[2px] right-[2px] h-[8px] w-[8px] text-[#666]" />
              </div>
            </div>
            <ShotTable />
            <div className="grid grid-cols-[59px_80px_1fr] gap-y-[4px] pt-[6px] pl-[2px] text-[#333]">
              <MethodRadio label="Dài xiên" value="slope" method={method} onPick={setMethod} />
              <MethodRadio label="Thủy bình (chênh cao)" value="diff" method={method} onPick={setMethod} />
              <label className="flex h-[12px] items-center gap-[5px] pl-[6px]">
                K
                <input
                  disabled
                  defaultValue="100"
                  className="h-[12px] w-[38px] border border-[#dcdcdc] bg-[#f0f0f0] px-[3px] text-[#9a9a9a]"
                />
              </label>
              <MethodRadio label="Dài bằng" value="flat" method={method} onPick={setMethod} />
              <MethodRadio label="Thủy bình (cao mia)" value="rod" method={method} onPick={setMethod} />
              <div className="pl-[5px]">
                <MethodRadio label="Ba dây" value="wires" method={method} onPick={setMethod} />
              </div>
            </div>
          </div>
        </div>
      </div>
    </div>
  );
}

function CommandLine() {
  return (
    <div className="flex h-[38px] shrink-0 bg-[#2d3344]">
      <div className="flex w-[15px] shrink-0 flex-col items-center gap-[4px] pt-[3px] text-[#cdd2d9]">
        <span className="h-[3px] w-[10px] bg-[#6d7585]" />
        <X className="h-[8px] w-[8px]" strokeWidth={4} />
        <Wrench className="h-[10px] w-[10px] fill-current" strokeWidth={2} />
      </div>
      <div className="flex min-w-0 flex-1 flex-col border-t border-[#6e6e6e] font-['DejaVu_Sans_Mono',monospace] text-[#333]">
        <div className="h-[24px] bg-[#c8c8c8] px-[2px] pt-[3px] leading-[9px] whitespace-pre">
          <p>Command: Specify opposite corner or [Fence/WPolygon/CPolygon]: *Cancel*</p>
          <p>Command:  &lt;Grid off&gt;</p>
        </div>
        <div className="flex flex-1 items-center gap-[2px] border-t border-[#8a8a8a] bg-white px-[3px]">
          <Svg className="h-[9px] w-[11px]">
            <path d="M0 2h20v16H0z" stroke="#777" strokeWidth="2" />
            <path d="M0 5h20M4 9l4 3-4 3" stroke="#777" strokeWidth="2" />
          </Svg>
          <Caret className="text-[#555]" />
          <input aria-label="Command" className="min-w-0 flex-1 outline-none" />
        </div>
      </div>
    </div>
  );
}

function StatusButton({ label, active, width, children }: { label: string; active?: boolean; width: string; children: React.ReactNode }) {
  return (
    <button
      aria-label={label}
      className={`flex h-[14px] shrink-0 items-center justify-center ${width} ${
        active ? 'bg-[#4f8fd6] text-[#d3e4f7]' : 'text-[#a4abb6]'
      }`}
    >
      <Svg className="h-[11px] w-[11px]">{children}</Svg>
    </button>
  );
}

function StatusBar() {
  return (
    <footer className="flex h-[19px] shrink-0 items-center border-b-2 border-[#8791a0] bg-[#222a35] text-[#8f97a3]">
      <nav className="flex gap-[14px] pl-[14px]">
        <button className="font-bold text-[#e6e8ec]">Model</button>
        <button>Layout1</button>
        <button>Layout2</button>
        <button aria-label="New layout" className="-ml-[1px] text-[9px] leading-none">
          +
        </button>
      </nav>
      <div className="ml-auto flex items-center pr-[3px]">
        <button className="mr-[4px] text-[#d8dce2]">MODEL</button>
        <StatusButton label="Grid" width="w-[15px]">
          <path d="M3 3h14v14H3zM3 8h14M3 12h14M8 3v14M12 3v14" stroke="currentColor" strokeWidth="1.5" />
        </StatusButton>
        <StatusButton label="Snap" width="w-[16px]">
          <path d="M3 4h14M3 10h14M3 16h14" stroke="currentColor" strokeWidth="3" strokeDasharray="3 3" />
        </StatusButton>
        <Caret className="mx-[3px] text-[#cdd2d9]" />
        <StatusButton label="Ortho" width="w-[16px]">
          <path d="M4 1v16h15M4 10h7v7" stroke="currentColor" strokeWidth="2" />
        </StatusButton>
        <StatusButton label="Polar" width="w-[14px]" active>
          <circle cx="9" cy="11" r="7" stroke="currentColor" strokeWidth="2" />
          <path d="M9 11h11M9 11l8-8" stroke="currentColor" strokeWidth="2" />
        </StatusButton>
        <Caret className="mx-[3px] text-[#cdd2d9]" />
        <StatusButton label="Isodraft" width="w-[14px]">
          <path d="M6 3v8l6 6M6 11l-3 5" stroke="#707988" strokeWidth="2" />
        </StatusButton>
        <Caret className="mx-[3px] text-[#cdd2d9]" />
        <StatusButton label="Object snap tracking" width="w-[14px]" active>
          <path d="M2 18L17 3M2 18h17M9 11h9" stroke="currentColor" strokeWidth="2" />
        </StatusButton>
        <span className="w-px" />
        <StatusButton label="Object snap" width="w-[14px]" active>
          <path d="M4 5h12v12H4zM1 2h5v5H1z" stroke="currentColor" strokeWidth="2" />
        </StatusButton>
        <Caret className="mx-[3px] text-[#cdd2d9]" />
        <StatusButton label="Dynamic UCS" width="w-[20px]">
          <path d="M5 2v15h13M2 5l3-3 3 3M9 8h5v5" stroke="currentColor" strokeWidth="2" />
        </StatusButton>
        <StatusButton label="Annotation scale" width="w-[14px]" active>
          <path d="M10 2v8l-6 8M10 10l6 8M6 4h8M8 10h8" stroke="#fff" strokeWidth="3" />
        </StatusButton>
        <button aria-label="Workspace" className="mx-[4px]">
          <Settings className="h-[11px] w-[11px] text-[#e6e8ec]" strokeWidth={4} />
        </button>
        <Caret className="mx-[2px] text-[#cdd2d9]" />
        <StatusButton label="Annotation monitor" width="w-[22px]">
          <path d="M2 3h6v5H2zM11 3h6v5h-6zM5 12h6v6H5zM8 8l3 4M14 8l4 8" stroke="#8b93a0" strokeWidth="2" />
        </StatusButton>
        <StatusButton label="Isolate objects" width="w-[14px]" active>
          <circle cx="10" cy="10" r="8" fill="#a9c9ee" />
          <path d="M5 15L15 5" stroke="#4f8fd6" strokeWidth="2" />
        </StatusButton>
        <StatusButton label="Hardware acceleration" width="w-[21px]">
          <path d="M2 2h15v13H2z" fill="#e6e8ec" />
          <path d="M9 9h6v9H9z" fill="#d9924a" />
          <path d="M4 5l5 4" stroke="#c24b4b" strokeWidth="2" />
        </StatusButton>
        <StatusButton label="Clean screen" width="w-[18px]">
          <path d="M1 3h18v13H1zM11 7h4v3M9 13H5v-3" stroke="currentColor" strokeWidth="2" />
        </StatusButton>
        <StatusButton label="Customization" width="w-[13px]">
          <path d="M0 4h20M0 10h20M0 16h20" stroke="#dfe2e7" strokeWidth="2" />
        </StatusButton>
      </div>
    </footer>
  );
}

export default function App() {
  return (
    <div className="flex h-screen flex-col overflow-hidden bg-[#222933] font-['Noto_Sans','Open_Sans',sans-serif] text-[7px] leading-[10px]">
      <Header />
      <RibbonTabs />
      <Ribbon />
      <FileTabs />
      <div className="flex min-h-0 flex-1 border-t border-[#3b4656]">
        <SidePalette />
        <main className="flex min-w-0 flex-1 flex-col">
          <div className="relative min-h-0 flex-1 overflow-hidden bg-black">
            <Drawing />
            <SurveyDialog />
          </div>
          <CommandLine />
        </main>
      </div>
      <StatusBar />
    </div>
  );
}
